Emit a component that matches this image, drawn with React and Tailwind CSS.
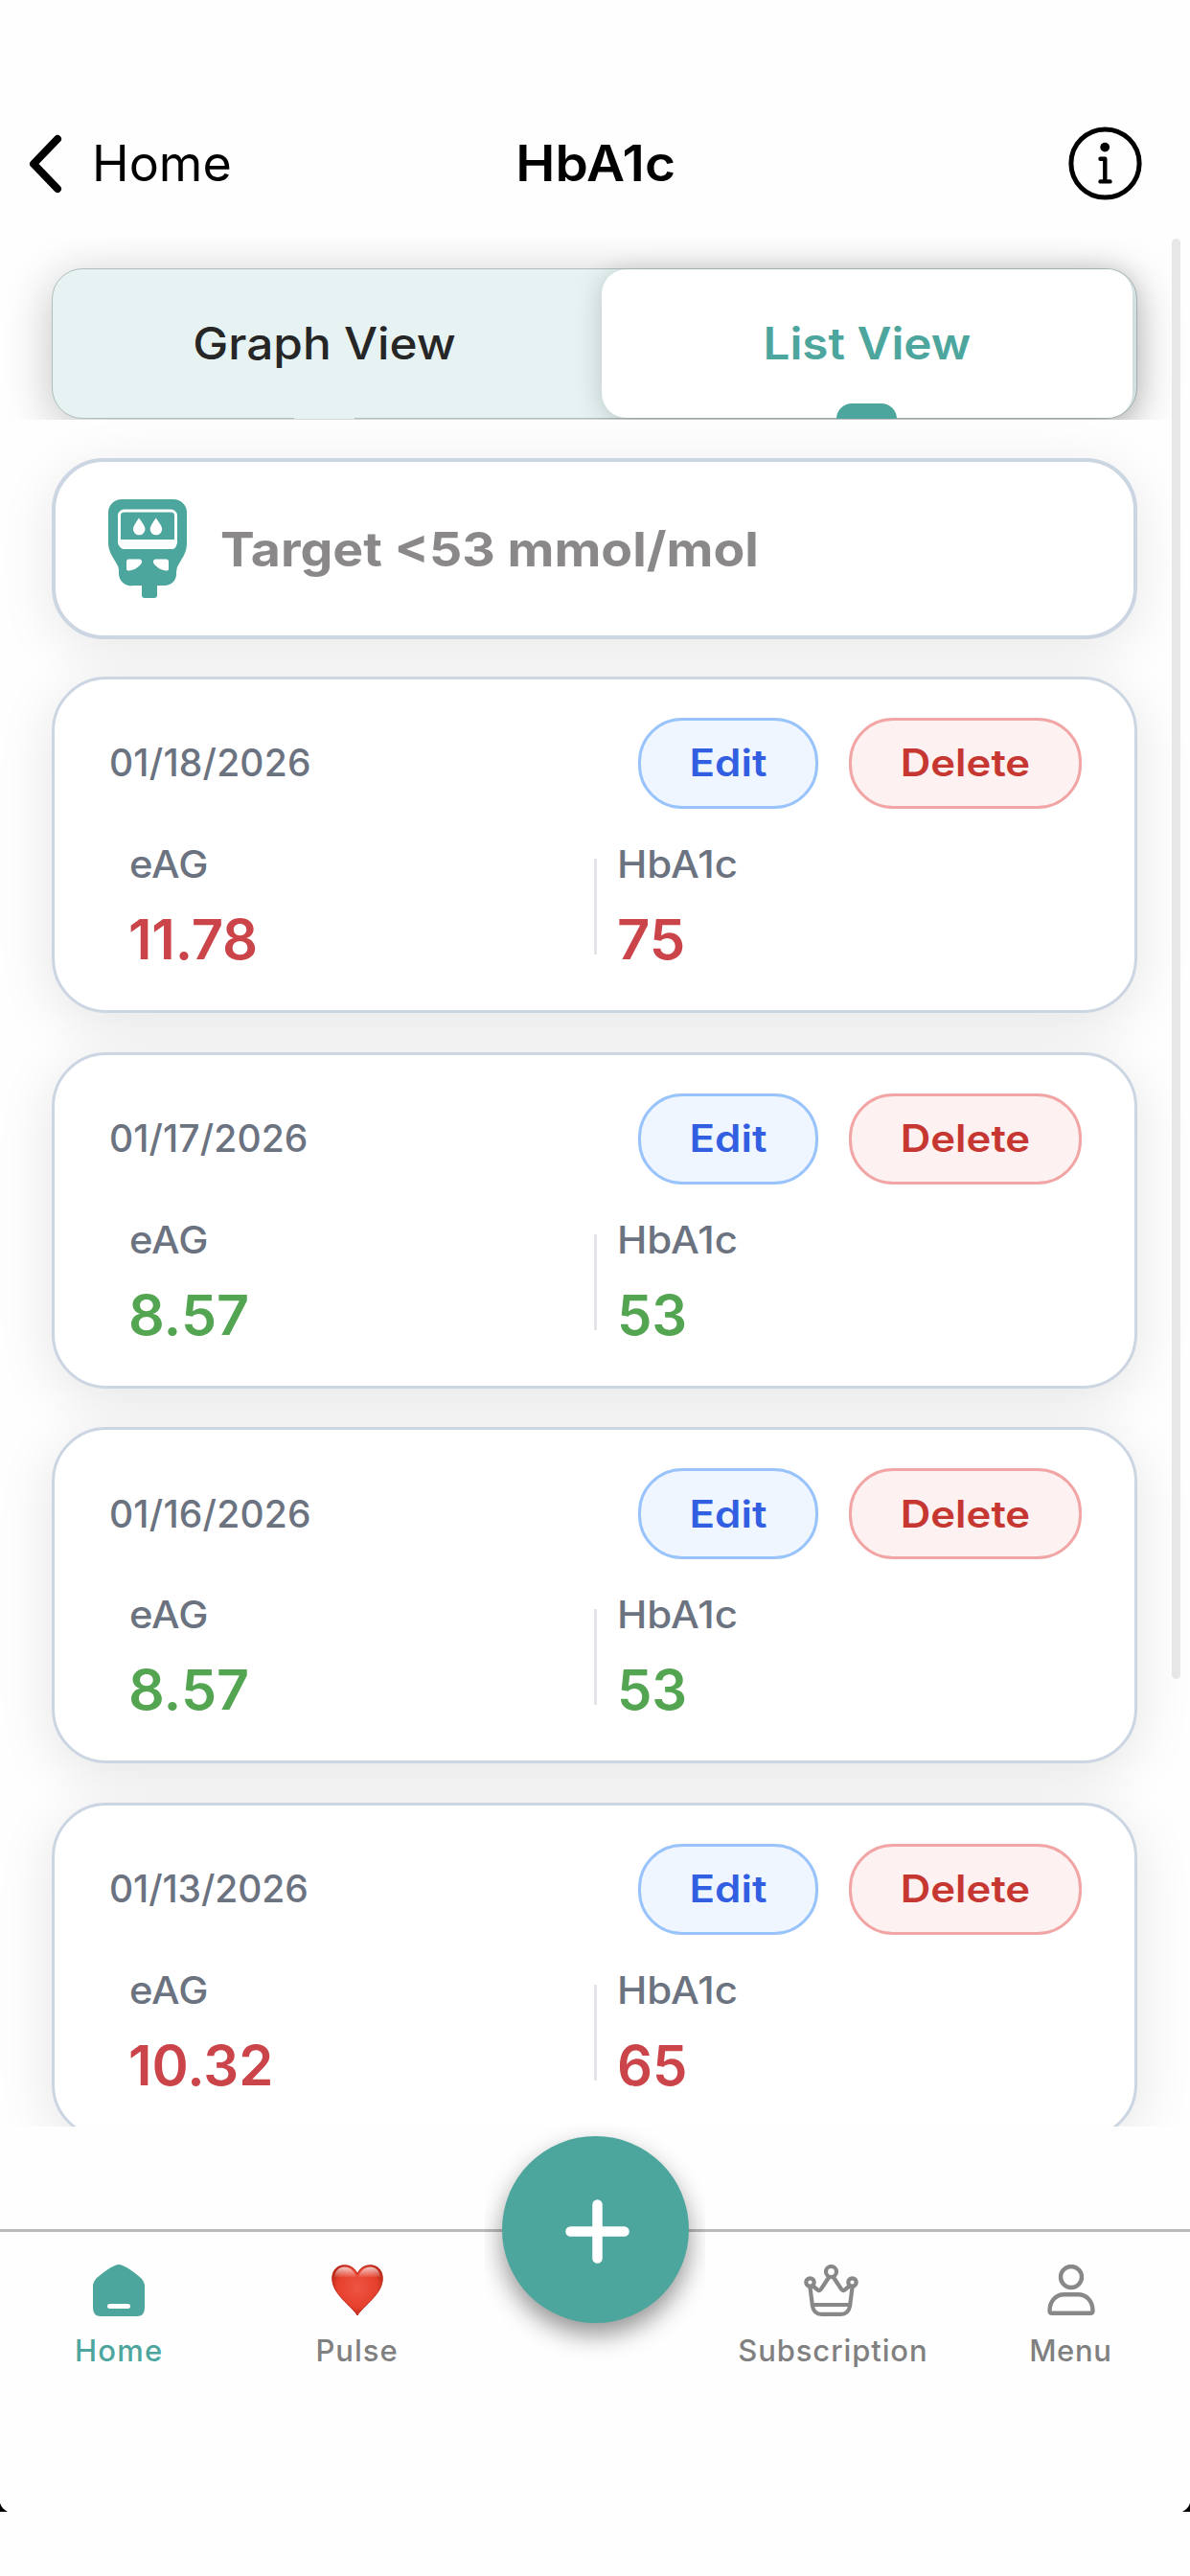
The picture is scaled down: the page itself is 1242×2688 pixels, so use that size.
import React from "react";

const RED = "text-[#cb444a]";
const GREEN = "text-[#54a552]";

const records = [
  { date: "01/18/2026", eag: "11.78", hba1c: "75", color: RED, eagTracking: "tracking-[-0.2px]", a1cTracking: "scale-x-[1.03]", dateTracking: "tracking-[0.2px]" },
  { date: "01/17/2026", eag: "8.57", hba1c: "53", color: GREEN, eagTracking: "scale-x-[1.02]", a1cTracking: "tracking-[-0.2px]", dateTracking: "tracking-[0.1px]" },
  { date: "01/16/2026", eag: "8.57", hba1c: "53", color: GREEN, eagTracking: "scale-x-[1.02]", a1cTracking: "tracking-[-0.2px]", dateTracking: "tracking-[0.2px]" },
  { date: "01/13/2026", eag: "10.32", hba1c: "65", color: RED, eagTracking: "tracking-[0px]", a1cTracking: "tracking-[0px]", dateTracking: "tracking-[-0.1px]" },
];

function Header() {
  return (
    <header className="grid h-[157px] grid-cols-[1fr_auto_1fr] items-center pr-[50px] pl-[29px] text-[52px] leading-[64px] text-black">
      <button className="flex items-center text-left">
        <svg width="36" height="62" viewBox="0 0 36 62" fill="none" stroke="#000" strokeWidth="8" strokeLinecap="round" strokeLinejoin="round">
          <path d="M31 5 6 31l25 26" />
        </svg>
        <span className="ml-[31px]">Home</span>
      </button>
      <h1 className="ml-[23px] scale-x-[1.06] font-semibold">HbA1c</h1>
      <svg className="justify-self-end" width="77" height="77" viewBox="0 0 77 77" fill="none" stroke="#000">
        <circle cx="38.5" cy="38.5" r="35.6" strokeWidth="5" />
        <circle cx="38.2" cy="21.6" r="4.9" fill="#000" stroke="none" />
        <path d="M33.5 33.8h4.8V57M33.5 57.4h10" strokeWidth="4.4" strokeLinecap="round" strokeLinejoin="round" />
      </svg>
    </header>
  );
}

function ViewTabs() {
  return (
    <div className="flex h-[189px] overflow-hidden pt-[31px] pl-[54px]">
      <div className="flex h-[157px] w-[1133px] rounded-[32px] border border-[#b0bebe] bg-[#e7f3f3] shadow-[0_10px_50px_rgba(0,0,0,0.24)]">
        <button className="relative flex w-[573px] items-center justify-center pr-[6px] text-[46px] font-medium text-[#262626]">
          <span className="scale-x-[1.076]">Graph View</span>
          <span className="absolute -bottom-px left-[252px] h-[2px] w-[63px] bg-[#e7f3f3]" />
        </button>
        <button className="relative flex w-[554px] items-center justify-center rounded-[26px] bg-white text-[46px] font-semibold text-[#4da69d] shadow-[0_4px_28px_rgba(0,0,0,0.2)]">
          <span className="scale-x-[1.075]">List View</span>
          <span className="absolute -bottom-px left-[245px] h-[16px] w-[63px] rounded-t-[16px] bg-[#4da69d]" />
        </button>
      </div>
    </div>
  );
}

function MeterIcon() {
  return (
    <svg width="82" height="104" viewBox="0 0 82 104" fill="#4da69d">
      <path d="M14 0h54a14 14 0 0 1 14 14v32c0 9-4 14-8 21q-3 4-3 9v3a12 12 0 0 1-12 11h-8v10q0 3-3 3H38q-3 0-3-3V90h-8A13 13 0 0 1 11 78v-4q0-4-3-8C4 59 0 54 0 45V14A14 14 0 0 1 14 0Z" />
      <rect x="11.5" y="12" width="59" height="38" rx="5" fill="none" stroke="#fff" strokeWidth="3" />
      <path d="M12 42h59v5q0 5-5 5H17q-5 0-5-5Z" fill="#fff" />
      <path d="M32 19.500q6.500 8.500 6.500 11.500a6.300 6.300 0 0 1-12.600 0q0-3 6.100-11.500Z" fill="#fff" />
      <path d="M49.700 19.500q6.500 8.500 6.500 11.500a6.300 6.300 0 0 1-12.600 0q0-3 6.100-11.500Z" fill="#fff" />
      <path d="M19 65q0-2.500 2.500-2.500H33q3 1 1.800 4C31 72 26 74 21.500 74.500 19 74.500 19 73 19 72Z" fill="#fff" />
      <path d="M63 65q0-2.500-2.500-2.500H49q-3 1-1.800 4C51 72 56 74 60.500 74.500 63 74.500 63 73 63 72Z" fill="#fff" />
    </svg>
  );
}

function TargetCard() {
  return (
    <section className="flex h-[189px] shrink-0 items-center rounded-[54px] border-4 border-[#ccd5e2] bg-white pl-[55px] shadow-[0_12px_60px_rgba(0,0,0,0.09)]">
      <MeterIcon />
      <p className="ml-[35px] origin-left scale-x-[1.072] text-[50px] leading-[60px] font-bold text-[#8b8889]">Target &lt;53 mmol/mol</p>
    </section>
  );
}

function RecordCard({ record }) {
  return (
    <article className="h-[351px] shrink-0 rounded-[57px] border-3 border-[#ccd5e2] bg-white pt-[40px] pr-[55px] pl-[57px] shadow-[0_12px_60px_rgba(0,0,0,0.1)]">
      <div className="flex h-[95px] items-center text-[39px]">
        <time className={`flex-1 font-medium text-[#6b7280] ${record.dateTracking}`}>{record.date}</time>
        <button className="flex h-[95px] w-[188px] items-center justify-center rounded-[46px] border-3 border-[#98c3fb] bg-[#eff6ff] font-semibold text-[#325fe2]">
          <span className="scale-x-[1.125]">Edit</span>
        </button>
        <button className="ml-[32px] flex h-[95px] w-[243px] items-center justify-center rounded-[46px] border-3 border-[#f1a5a5] bg-[#fdf1f1] font-semibold text-[#c63732]">
          <span className="scale-x-[1.12]">Delete</span>
        </button>
      </div>
      <div className="mt-[34px] flex">
        <div className="w-[506px] pl-[21px]">
          <p className="origin-left scale-x-[1.07] text-[39px] leading-[48px] font-medium text-[#6b7280]">eAG</p>
          <p className={`-ml-px origin-left pt-[19px] text-[58px] leading-[70px] font-semibold ${record.color} ${record.eagTracking}`}>{record.eag}</p>
        </div>
        <div className="mt-[18px] h-[100px] w-[3px] bg-[#e3e5ea]" />
        <div className="pl-[21px]">
          <p className="origin-left scale-x-[1.08] text-[39px] leading-[48px] font-medium text-[#6b7280]">HbA1c</p>
          <p className={`origin-left pt-[19px] text-[58px] leading-[70px] font-semibold ${record.color} ${record.a1cTracking}`}>{record.hba1c}</p>
        </div>
      </div>
    </article>
  );
}

function HomeIcon() {
  return (
    <svg width="54" height="54" viewBox="0 0 54 54">
      <path d="M23 1q4-2 8 0c7 3 13 8 19 13q4 4 4 9v22q0 9-8 9H8q-8 0-8-9V23q0-5 4-9C10 9 16 4 23 1Z" fill="#4da69d" />
      <rect x="15" y="41" width="24" height="5" rx="2.500" fill="#fff" />
    </svg>
  );
}

function HeartIcon() {
  return (
    <svg className="ml-px" width="54" height="54" viewBox="0 0 54 54">
      <defs>
        <radialGradient id="heartFill" cx="0.5" cy="0.45" r="0.62">
          <stop offset="0" stopColor="#ee5443" />
          <stop offset="0.65" stopColor="#e5402c" />
          <stop offset="1" stopColor="#a81d10" />
        </radialGradient>
        <linearGradient id="heartShine" x1="0" y1="0" x2="0" y2="1">
          <stop offset="0" stopColor="#fff" stopOpacity="0.75" />
          <stop offset="1" stopColor="#fff" stopOpacity="0" />
        </linearGradient>
      </defs>
      <path d="M27 53C21 43 .7 31 .7 14.500.7 6 6 .7 13.500.7 20 .7 25 4.500 27 10 29 4.500 34 .7 40.500.7 48 .7 53.300 6 53.300 14.500 53.300 31 33 43 27 53Z" fill="url(#heartFill)" stroke="#c0281a" strokeWidth="1" />
      <path d="M3 13C4 6 8 2.500 13.500 2.500S24 6 26 13.500q1 1 2 0C30 6 35 2.500 40.500 2.500S50 6 51 13Z" fill="url(#heartShine)" />
    </svg>
  );
}

function CrownIcon() {
  return (
    <svg className="mr-[4px]" width="57" height="54" viewBox="0 0 57 54" fill="none" stroke="#888" strokeWidth="4.200" strokeLinecap="round" strokeLinejoin="round">
      <circle cx="28.500" cy="7.500" r="5.500" />
      <circle cx="6.500" cy="18.500" r="4.200" />
      <circle cx="50.500" cy="18.500" r="4.200" />
      <path d="M6.500 24 9 43.500Q10.500 51.800 18.500 51.800h20Q46.500 51.800 48 43.500L50.500 24M9.500 22.500 14.500 26.500Q16.500 28 18 25.500L26 13.500M47.500 22.500 42.500 26.500Q40.500 28 39 25.500L31 13.500M9 42h39" />
    </svg>
  );
}

function UserIcon() {
  return (
    <svg className="ml-px" width="50" height="54" viewBox="0 0 50 54" fill="none" stroke="#888" strokeWidth="4.400" strokeLinejoin="round">
      <circle cx="25" cy="13" r="11" />
      <path d="M18 31.200h14c10 0 15.500 8 15.500 17q0 2.500-2.500 2.500H5q-2.500 0-2.500-2.500c0-9 5.500-17 15.500-17Z" />
    </svg>
  );
}

function NavItem({ icon, label, className }) {
  return (
    <button className="flex flex-col items-center pt-[34px]">
      {icon}
      <span className={`mt-[16px] text-[31px] leading-[40px] font-medium ${className}`}>{label}</span>
    </button>
  );
}

function BottomNav() {
  return (
    <nav className="relative mt-[107px] grid grid-cols-5 border-t-3 border-[#bababa] bg-[#fefefe]">
      <NavItem icon={<HomeIcon />} label="Home" className="tracking-[1.2px] text-[#4da69d]" />
      <NavItem icon={<HeartIcon />} label="Pulse" className="tracking-[1px] text-[#808080]" />
      <div />
      <NavItem icon={<CrownIcon />} label="Subscription" className="tracking-[0.9px] text-[#808080]" />
      <NavItem icon={<UserIcon />} label="Menu" className="pr-[1px] tracking-[0.6px] text-[#808080]" />
      <div className="absolute -top-[129px] left-[506px] h-[270px] w-[230px] overflow-hidden pt-[29px] pl-[18px]">
        <button className="flex size-[195px] items-center justify-center rounded-full bg-[#4da69d] shadow-[0_12px_26px_rgba(0,0,0,0.42)]">
          <svg className="mt-[3px] ml-[3px]" width="67" height="67" viewBox="0 0 67 67" stroke="#fff" strokeWidth="10.500" strokeLinecap="round">
            <path d="M33.500 5.500v56M5.500 33.500h56" />
          </svg>
        </button>
      </div>
    </nav>
  );
}

function ScreenCorners() {
  return (
    <div className="mt-[139px] flex justify-between">
      <svg width="8" height="9" viewBox="0 0 8 9"><path d="M0 0q2 6 8 9H0Z" /></svg>
      <svg width="8" height="9" viewBox="0 0 8 9"><path d="M8 0Q6 6 0 9h8Z" /></svg>
    </div>
  );
}

export default function App() {
  return (
    <div className="relative h-[2688px] w-[1242px] overflow-hidden bg-[#fefefe] pt-[92px] font-['Inter',sans-serif]">
      <Header />
      <ViewTabs />
      <main className="flex h-[1781px] flex-col gap-[40.670px] overflow-hidden pt-[40px] pr-[55px] pl-[54px]">
        <div className="-mb-[1.670px] flex flex-col">
          <TargetCard />
        </div>
        {records.map((record) => (
          <RecordCard key={record.date} record={record} />
        ))}
      </main>
      <BottomNav />
      <ScreenCorners />
      <div className="absolute top-[249px] left-[1223px] h-[1503px] w-[9px] rounded-full bg-[#e7e7e7]" />
    </div>
  );
}
